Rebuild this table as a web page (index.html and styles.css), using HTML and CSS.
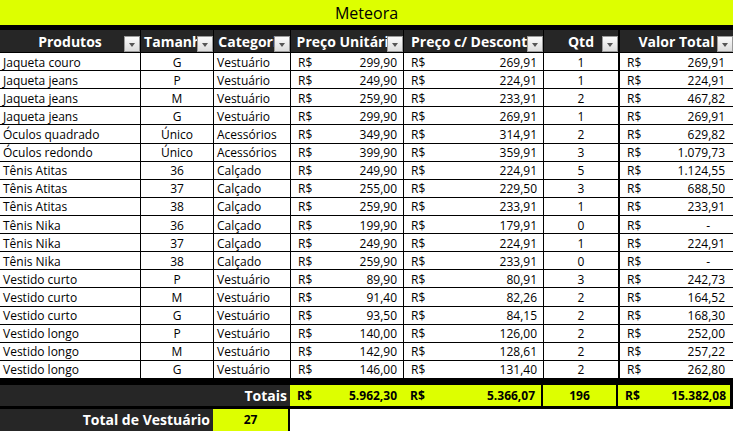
FILE: index.html
```html
<!DOCTYPE html>
<html lang="pt-BR">
<head>
<meta charset="utf-8">
<title>Meteora</title>
<link rel="stylesheet" href="styles.css">
</head>
<body>
<div class="sheet">
  <div class="title">Meteora</div>
  <div class="band"></div>
  <div class="row head">
    <div class="c c1"><span class="ht">Produtos</span><i class="fb"></i></div>
    <div class="c c2"><span class="ht">Tamanho</span><i class="fb"></i></div>
    <div class="c c3"><span class="ht">Categoria</span><i class="fb"></i></div>
    <div class="c c4"><span class="ht">Preço Unitário</span><i class="fb"></i></div>
    <div class="c c5"><span class="ht">Preço c/ Desconto</span><i class="fb"></i></div>
    <div class="c c6"><span class="ht">Qtd</span><i class="fb"></i></div>
    <div class="c c7"><span class="ht">Valor Total</span><i class="fb"></i></div>
  </div>
  <div class="body">
    <div class="row"><div class="c c1">Jaqueta couro</div><div class="c c2 ctr">G</div><div class="c c3">Vestuário</div><div class="c c4 m"><span>R$</span><span>299,90</span></div><div class="c c5 m"><span>R$</span><span>269,91</span></div><div class="c c6 ctr">1</div><div class="c c7 m"><span>R$</span><span>269,91</span></div></div>
    <div class="row"><div class="c c1">Jaqueta jeans</div><div class="c c2 ctr">P</div><div class="c c3">Vestuário</div><div class="c c4 m"><span>R$</span><span>249,90</span></div><div class="c c5 m"><span>R$</span><span>224,91</span></div><div class="c c6 ctr">1</div><div class="c c7 m"><span>R$</span><span>224,91</span></div></div>
    <div class="row"><div class="c c1">Jaqueta jeans</div><div class="c c2 ctr">M</div><div class="c c3">Vestuário</div><div class="c c4 m"><span>R$</span><span>259,90</span></div><div class="c c5 m"><span>R$</span><span>233,91</span></div><div class="c c6 ctr">2</div><div class="c c7 m"><span>R$</span><span>467,82</span></div></div>
    <div class="row"><div class="c c1">Jaqueta jeans</div><div class="c c2 ctr">G</div><div class="c c3">Vestuário</div><div class="c c4 m"><span>R$</span><span>299,90</span></div><div class="c c5 m"><span>R$</span><span>269,91</span></div><div class="c c6 ctr">1</div><div class="c c7 m"><span>R$</span><span>269,91</span></div></div>
    <div class="row"><div class="c c1">Óculos quadrado</div><div class="c c2 ctr">Único</div><div class="c c3">Acessórios</div><div class="c c4 m"><span>R$</span><span>349,90</span></div><div class="c c5 m"><span>R$</span><span>314,91</span></div><div class="c c6 ctr">2</div><div class="c c7 m"><span>R$</span><span>629,82</span></div></div>
    <div class="row"><div class="c c1">Óculos redondo</div><div class="c c2 ctr">Único</div><div class="c c3">Acessórios</div><div class="c c4 m"><span>R$</span><span>399,90</span></div><div class="c c5 m"><span>R$</span><span>359,91</span></div><div class="c c6 ctr">3</div><div class="c c7 m"><span>R$</span><span>1.079,73</span></div></div>
    <div class="row"><div class="c c1">Tênis Atitas</div><div class="c c2 ctr">36</div><div class="c c3">Calçado</div><div class="c c4 m"><span>R$</span><span>249,90</span></div><div class="c c5 m"><span>R$</span><span>224,91</span></div><div class="c c6 ctr">5</div><div class="c c7 m"><span>R$</span><span>1.124,55</span></div></div>
    <div class="row"><div class="c c1">Tênis Atitas</div><div class="c c2 ctr">37</div><div class="c c3">Calçado</div><div class="c c4 m"><span>R$</span><span>255,00</span></div><div class="c c5 m"><span>R$</span><span>229,50</span></div><div class="c c6 ctr">3</div><div class="c c7 m"><span>R$</span><span>688,50</span></div></div>
    <div class="row"><div class="c c1">Tênis Atitas</div><div class="c c2 ctr">38</div><div class="c c3">Calçado</div><div class="c c4 m"><span>R$</span><span>259,90</span></div><div class="c c5 m"><span>R$</span><span>233,91</span></div><div class="c c6 ctr">1</div><div class="c c7 m"><span>R$</span><span>233,91</span></div></div>
    <div class="row"><div class="c c1">Tênis Nika</div><div class="c c2 ctr">36</div><div class="c c3">Calçado</div><div class="c c4 m"><span>R$</span><span>199,90</span></div><div class="c c5 m"><span>R$</span><span>179,91</span></div><div class="c c6 ctr">0</div><div class="c c7 m"><span>R$</span><span class="dash">-</span></div></div>
    <div class="row"><div class="c c1">Tênis Nika</div><div class="c c2 ctr">37</div><div class="c c3">Calçado</div><div class="c c4 m"><span>R$</span><span>249,90</span></div><div class="c c5 m"><span>R$</span><span>224,91</span></div><div class="c c6 ctr">1</div><div class="c c7 m"><span>R$</span><span>224,91</span></div></div>
    <div class="row"><div class="c c1">Tênis Nika</div><div class="c c2 ctr">38</div><div class="c c3">Calçado</div><div class="c c4 m"><span>R$</span><span>259,90</span></div><div class="c c5 m"><span>R$</span><span>233,91</span></div><div class="c c6 ctr">0</div><div class="c c7 m"><span>R$</span><span class="dash">-</span></div></div>
    <div class="row"><div class="c c1">Vestido curto</div><div class="c c2 ctr">P</div><div class="c c3">Vestuário</div><div class="c c4 m"><span>R$</span><span>89,90</span></div><div class="c c5 m"><span>R$</span><span>80,91</span></div><div class="c c6 ctr">3</div><div class="c c7 m"><span>R$</span><span>242,73</span></div></div>
    <div class="row"><div class="c c1">Vestido curto</div><div class="c c2 ctr">M</div><div class="c c3">Vestuário</div><div class="c c4 m"><span>R$</span><span>91,40</span></div><div class="c c5 m"><span>R$</span><span>82,26</span></div><div class="c c6 ctr">2</div><div class="c c7 m"><span>R$</span><span>164,52</span></div></div>
    <div class="row"><div class="c c1">Vestido curto</div><div class="c c2 ctr">G</div><div class="c c3">Vestuário</div><div class="c c4 m"><span>R$</span><span>93,50</span></div><div class="c c5 m"><span>R$</span><span>84,15</span></div><div class="c c6 ctr">2</div><div class="c c7 m"><span>R$</span><span>168,30</span></div></div>
    <div class="row"><div class="c c1">Vestido longo</div><div class="c c2 ctr">P</div><div class="c c3">Vestuário</div><div class="c c4 m"><span>R$</span><span>140,00</span></div><div class="c c5 m"><span>R$</span><span>126,00</span></div><div class="c c6 ctr">2</div><div class="c c7 m"><span>R$</span><span>252,00</span></div></div>
    <div class="row"><div class="c c1">Vestido longo</div><div class="c c2 ctr">M</div><div class="c c3">Vestuário</div><div class="c c4 m"><span>R$</span><span>142,90</span></div><div class="c c5 m"><span>R$</span><span>128,61</span></div><div class="c c6 ctr">2</div><div class="c c7 m"><span>R$</span><span>257,22</span></div></div>
    <div class="row"><div class="c c1">Vestido longo</div><div class="c c2 ctr">G</div><div class="c c3">Vestuário</div><div class="c c4 m"><span>R$</span><span>146,00</span></div><div class="c c5 m"><span>R$</span><span>131,40</span></div><div class="c c6 ctr">2</div><div class="c c7 m"><span>R$</span><span>262,80</span></div></div>
  </div>
  <div class="totals">
    <div class="t-label">Totais</div>
    <div class="t-cell t-pu"><span>R$</span><span>5.962,30</span></div>
    <div class="t-cell t-pd"><span>R$</span><span>5.366,07</span></div>
    <div class="t-cell t-q">196</div>
    <div class="t-cell t-v"><span>R$</span><span>15.382,08</span></div>
  </div>
  <div class="vest">
    <div class="v-label">Total de Vestuário</div>
    <div class="v-val">27</div>
  </div>
</div>
</body>
</html>
```

FILE: styles.css
```css
* { box-sizing: border-box; margin: 0; padding: 0; }
html, body { background: #fff; }
body {
  width: 733px;
  height: 431px;
  overflow: hidden;
  font-family: "Open Sans", "Liberation Sans", sans-serif;
  color: #000;
}
.sheet { display: flex; flex-direction: column; width: 733px; }

.title {
  height: 25px;
  background: #ddff00;
  display: flex;
  align-items: center;
  justify-content: center;
  font-size: 16px;
  padding-top: 1px;
}
.band { height: 5px; background: #000; }

.row {
  display: grid;
  grid-template-columns: 141px 73px 77px 113px 140px 76px 113px;
  height: 18.11px;
  border-bottom: 1px solid #000;
}
.c {
  border-right: 1px solid #000;
  display: flex;
  align-items: center;
  font-size: 12px;
  white-space: nowrap;
  overflow: hidden;
  padding: 1px 3px 0;
}
.c6 { border-right-width: 2px; }
.c7 { border-right: none; }
.ctr { justify-content: center; }
.m { justify-content: space-between; padding: 1px 6px 0 7px; }
.c7.m { padding-right: 8px; }
.dash { padding-right: 15px; }

.head {
  height: 23px;
  background: #262626;
}
.head .c {
  position: relative;
  justify-content: center;
  color: #fff;
  font-weight: 700;
  font-size: 14px;
  padding: 0;
  overflow: hidden;
}
.head .ht { display: block; white-space: nowrap; }
.fb {
  position: absolute;
  right: 0;
  bottom: 0;
  width: 16px;
  height: 16px;
  border: 1px solid #9a9a9a;
  background: linear-gradient(#fbfbfb, #dcdcdc);
}
.fb::after {
  content: "";
  position: absolute;
  left: 4px;
  top: 6px;
  border-left: 3.5px solid transparent;
  border-right: 3.5px solid transparent;
  border-top: 4px solid #555;
}

.totals {
  display: grid;
  grid-template-columns: 290px 113px 140px 75px 115px;
  height: 30px;
  background: #000;
  border-top: 6px solid #000;
  border-bottom: 3px solid #000;
  font-weight: 700;
  font-size: 12px;
}
.t-label {
  background: #262626;
  color: #fff;
  font-size: 14px;
  display: flex;
  align-items: center;
  justify-content: flex-end;
  padding-right: 3px;
}
.t-cell {
  background: #ddff00;
  display: flex;
  align-items: center;
  white-space: nowrap;
}
.t-pu, .t-pd { justify-content: space-between; padding: 0 6px 0 7px; }
.t-pd { border-right: 2px solid #000; }
.t-q { justify-content: center; border-right: 2px solid #000; }
.t-v { justify-content: space-between; padding: 0 4px 0 7px; border-right: 3px solid #000; }

.vest {
  display: grid;
  grid-template-columns: 213px 77px;
  width: 290px;
  height: 22px;
  font-weight: 700;
}
.v-label {
  background: #262626;
  color: #fff;
  font-size: 14px;
  display: flex;
  align-items: center;
  justify-content: flex-end;
  padding-right: 3px;
}
.v-val {
  background: #ddff00;
  border-right: 2px solid #000;
  display: flex;
  align-items: center;
  justify-content: center;
  font-size: 12px;
}
```
